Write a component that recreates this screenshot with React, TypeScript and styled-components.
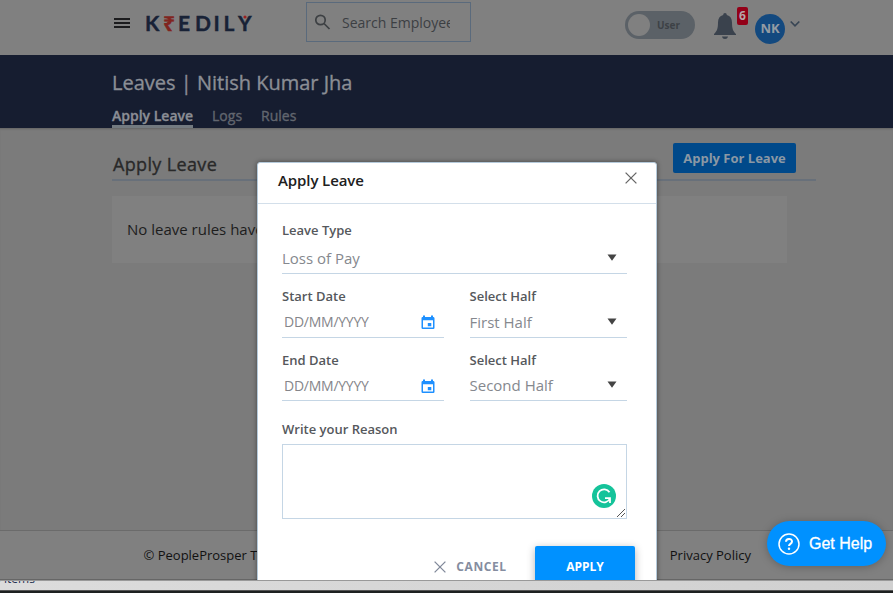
import React from "react";
import styled, { createGlobalStyle } from "styled-components";

const Global = createGlobalStyle`
  *, *::before, *::after { box-sizing: border-box; }
  html, body { margin: 0; padding: 0; overflow: hidden; }
  body { font-family: "Open Sans", "Noto Sans", sans-serif; }
`;

const Screen = styled.div`
  position: relative;
  width: 893px;
  height: 593px;
  overflow: hidden;
  display: flex;
  flex-direction: column;
  background: #7b7b7b;
`;

const Text = styled.span<{
  $size: number;
  $line?: number;
  $weight?: number;
  $color: string;
  $track?: number;
  $medium?: boolean;
}>`
  display: block;
  font-size: ${(p) => p.$size}px;
  line-height: ${(p) => p.$line ?? 20}px;
  font-weight: ${(p) => p.$weight ?? 400};
  color: ${(p) => p.$color};
  letter-spacing: ${(p) => p.$track ?? 0}px;
  -webkit-text-stroke: ${(p) => (p.$medium ? "0.35px currentColor" : "0")};
  white-space: nowrap;
`;

const TopBar = styled.header`
  flex: none;
  height: 55px;
  display: flex;
  align-items: flex-start;
  padding-left: 114px;
  background: #808080;
`;

const MenuIcon = styled.svg`
  margin-top: 17px;
  width: 16px;
  height: 12px;
`;

const Logo = styled.svg`
  margin: 10px 0 0 14px;
  width: 114px;
  height: 26px;
  font-family: Lato, sans-serif;
  font-weight: 700;
  font-size: 21px;
`;

const Search = styled.label`
  margin: 2px 0 0 48px;
  width: 165px;
  height: 40px;
  display: flex;
  align-items: center;
  padding-left: 8px;
  border: 1px solid #5a6a7c;
`;

const SearchText = styled.div`
  margin: 2px 0 0 11px;
  width: 108px;
  overflow: hidden;
`;

const Toggle = styled.div`
  margin: 11px 0 0 154px;
  width: 70px;
  height: 28px;
  border-radius: 14px;
  padding: 3px;
  display: flex;
  align-items: center;
  gap: 7px;
  background: #5b6167;
`;

const Knob = styled.i`
  width: 22px;
  height: 22px;
  border-radius: 50%;
  background: #808080;
`;

const Bell = styled.svg`
  margin: 12px 0 0 19px;
  width: 22px;
  height: 28px;
`;

const Badge = styled.b`
  margin: 7px 0 0 1px;
  width: 11px;
  height: 18px;
  border-radius: 2px;
  background: #930018;
  color: #b5a5a8;
  font-size: 12px;
  line-height: 18px;
  text-align: center;
`;

const Avatar = styled.b`
  margin: 14px 0 0 7px;
  width: 30px;
  height: 30px;
  border-radius: 50%;
  background: #13497f;
  color: #949ca4;
  font-size: 13px;
  line-height: 29px;
  text-align: center;
`;

const Chevron = styled.svg`
  margin: 20px 0 0 5px;
  width: 10px;
  height: 8px;
`;

const Banner = styled.section`
  flex: none;
  height: 73px;
  padding: 14px 0 0 112px;
  background: #161d30;
`;

const Tabs = styled.nav`
  display: flex;
  gap: 19px;
  margin-top: 9px;
`;

const Tab = styled.div<{ $active?: boolean }>`
  height: 22px;
  border-bottom: ${(p) => (p.$active ? "3px solid #737a80" : "none")};
`;

const Content = styled.main`
  flex: none;
  height: 402px;
  padding-left: 112px;
  box-shadow: inset 0 2px 2px -1px #656565;
`;

const Heading = styled.div`
  height: 53px;
  width: 704px;
  display: flex;
  justify-content: space-between;
  padding: 15px 20px 0 1px;
  border-bottom: 2px solid #68707a;
`;

const ApplyFor = styled.div`
  width: 123px;
  height: 30px;
  border-radius: 2px;
  background: #00498a;
  display: flex;
  justify-content: center;
  align-items: center;
`;

const Notice = styled.div`
  margin-top: 15px;
  width: 675px;
  height: 67px;
  padding: 23px 0 0 15px;
  background: #808080;
`;

const Footer = styled.footer`
  flex: none;
  height: 50px;
  border-top: 1px solid #6b6b6b;
  border-bottom: 1px solid #666;
  background: #808080;
  display: flex;
  justify-content: space-between;
  padding: 14px 142px 0 143.5px;
`;

const StatusBar = styled.div`
  flex: none;
  height: 10px;
  border-top: 1px solid #999;
  background: linear-gradient(90deg, #dcdcdc, #d0d0d0);
  overflow: hidden;
`;

const StatusText = styled.div`
  margin: -11px 0 0 -6px;
`;

const BottomEdge = styled.div`
  flex: none;
  height: 3px;
  background: #1d2020;
  border-top: 1px solid #555;
`;

const ModalClip = styled.div`
  position: absolute;
  left: 247px;
  top: 152px;
  width: 420px;
  height: 428px;
  padding: 10px 10px 0;
  overflow: hidden;
`;

const Modal = styled.div`
  width: 400px;
  height: 460px;
  border: 1px solid #b5cadb;
  border-radius: 3px;
  background: #fff;
  box-shadow: 0 0 5px rgba(0, 0, 0, 0.45);
`;

const ModalHead = styled.div`
  height: 41px;
  display: flex;
  justify-content: space-between;
  padding: 7px 19px 0 20px;
  border-bottom: 1px solid #d3dfea;

  svg { margin-top: 2px; }
`;

const Form = styled.div`
  padding: 16px 29px 0 24px;
`;

const Row = styled.div<{ $top?: number }>`
  display: grid;
  grid-template-columns: 162px 157.5px;
  justify-content: space-between;
  margin-top: ${(p) => p.$top ?? 0}px;
`;

const Control = styled.div<{ $h: number; $right: number; $left?: number; $drop?: number }>`
  height: ${(p) => p.$h}px;
  display: flex;
  align-items: flex-start;
  justify-content: space-between;
  padding: ${(p) => p.$drop ?? 6}px ${(p) => p.$right}px 0 ${(p) => p.$left ?? 0}px;
  border-bottom: 1px solid #c5d6e5;
`;

const Arrow = styled.svg`
  margin-top: 6px;
  width: 10px;
  height: 7px;
`;

const CalendarIcon = styled.svg`
  margin-top: 3px;
  width: 14px;
  height: 15px;
`;

const Reason = styled.div`
  margin-top: 5px;
  height: 75px;
  border: 1px solid #c5d6e5;
  display: flex;
  justify-content: flex-end;
  align-items: flex-end;
`;

const Grammar = styled.svg`
  width: 24px;
  height: 24px;
  margin-bottom: 10px;
`;

const Grip = styled.svg`
  width: 10px;
  height: 10px;
`;

const Actions = styled.div`
  display: flex;
  justify-content: flex-end;
  padding: 27px 21px 0 0;
`;

const Cancel = styled.div`
  height: 42px;
  display: flex;
  align-items: center;
  gap: 10px;
  margin-right: 28.5px;
`;

const Apply = styled.div`
  width: 100px;
  height: 42px;
  border-radius: 2px;
  background: #0091ff;
  box-shadow: 0 2px 8px rgba(0, 0, 0, 0.3);
  display: flex;
  justify-content: center;
  align-items: center;
`;

const Help = styled.div`
  position: absolute;
  left: 767px;
  top: 521px;
  width: 119px;
  height: 45px;
  border-radius: 23px;
  padding-left: 11px;
  display: flex;
  align-items: center;
  gap: 9px;
  background: #0091ff;
  box-shadow: 0 1px 8px rgba(0, 0, 0, 0.25);
  color: #fff;
  font: 16px/20px "Liberation Sans", sans-serif;
  -webkit-text-stroke: 0.3px #fff;
  white-space: nowrap;
`;

const Cross = ({ color, size = 12 }: { color: string; size?: number }) => (
  <svg width={size} height={size} viewBox="0 0 12 12">
    <path d="M.6.6 11.4 11.4M11.4.6.6 11.4" stroke={color} strokeWidth="1.3" />
  </svg>
);

const DownArrow = () => (
  <Arrow viewBox="0 0 10 7">
    <path d="M.5.5h9L5 6.8z" fill="#444" />
  </Arrow>
);

const Calendar = () => (
  <CalendarIcon viewBox="0 0 14 15">
    <path
      fill="#1e90ff"
      fillRule="evenodd"
      d="M2 .5h2V2h6V.5h2V2h.5A1.2 1.2 0 0 1 13.500 3.200v9.600a1.200 1.200 0 0 1-1.200 1.200H1.700A1.200 1.200 0 0 1 .5 12.800V3.200A1.200 1.200 0 0 1 1.700 2H2zM2 5.300v7.200h10V5.300zM6.800 8h3.500v3.300H6.800z"
    />
  </CalendarIcon>
);

const Label = ({ children }: { children: React.ReactNode }) => (
  <Text $size={13} $weight={600} $color="#55585c">{children}</Text>
);

const Select = ({ label, value, h, drop }: { label: string; value: string; h: number; drop?: number }) => (
  <div>
    <Label>{label}</Label>
    <Control $h={h} $right={10} $drop={drop}>
      <Text $size={15} $color="#85888e">{value}</Text>
      <DownArrow />
    </Control>
  </div>
);

const DateField = ({ label, h }: { label: string; h: number }) => (
  <div>
    <Label>{label}</Label>
    <Control $h={h} $right={9} $left={2}>
      <Text $size={14} $color="#85858a" $track={-0.25}>DD/MM/YYYY</Text>
      <Calendar />
    </Control>
  </div>
);

export default function App() {
  return (
    <Screen>
      <Global />
      <TopBar>
        <MenuIcon viewBox="0 0 16 12">
          <path d="M0 2h16M0 6h16M0 10h16" stroke="#1c1c1e" strokeWidth="2" />
        </MenuIcon>
        <Logo viewBox="0 0 114 26" fill="#182236" stroke="#182236" strokeWidth="0.4">
          <text x="1" y="20.500">K</text>
          <text x="19" y="20.500" fill="#80251f" stroke="#80251f" fontFamily="Noto Sans" fontSize="21">₹</text>
          <text x="34" y="20.500">E</text>
          <text x="51" y="20.500">D</text>
          <text x="69.500" y="20.500">I</text>
          <text x="79.500" y="20.500">L</text>
          <text x="94" y="20.500">Y</text>
          <circle cx="101" cy="7" r="1.600" fill="#9b2020" stroke="none" />
        </Logo>
        <Search>
          <svg width="16" height="16" viewBox="0 0 16 16" fill="none" stroke="#3d4043" strokeWidth="1.700">
            <circle cx="5.500" cy="6" r="4.700" />
            <path d="m9 9.500 5.500 5.500" />
          </svg>
          <SearchText>
            <Text $size={14} $color="#3c3f43">Search Employee</Text>
          </SearchText>
        </Search>
        <Toggle>
          <Knob />
          <Text $size={10} $weight={700} $color="#3d4146">User</Text>
        </Toggle>
        <Bell viewBox="0 0 22 28" fill="#3a424d">
          <path d="M11 1c1.100 0 1.800.8 1.800 2 3.500.8 5.200 3.500 5.200 7.500 0 6 1 8.500 4 11.500v1H0v-1c3-3 4-5.500 4-11.500C4 6.500 5.700 3.800 9.200 3c0-1.200.7-2 1.800-2M8 24.500h6c-.3 1.700-1.500 2.500-3 2.500s-2.700-.8-3-2.500" />
        </Bell>
        <Badge>6</Badge>
        <Avatar>NK</Avatar>
        <Chevron viewBox="0 0 10 8">
          <path d="m.7 1.500 4.300 4.300 4.300-4.300" fill="none" stroke="#384554" strokeWidth="1.700" />
        </Chevron>
      </TopBar>
      <Banner>
        <Text $size={20} $line={28} $color="#8b8e95" $medium>Leaves | Nitish Kumar Jha</Text>
        <Tabs>
          <Tab $active><Text $size={14} $weight={600} $color="#8b8e95" $medium>Apply Leave</Text></Tab>
          <Tab><Text $size={14} $color="#62666f" $medium>Logs</Text></Tab>
          <Tab><Text $size={14} $color="#62666f" $medium>Rules</Text></Tab>
        </Tabs>
      </Banner>
      <Content>
        <Heading>
          <Text $size={18} $line={42} $color="#292929" $track={0.35} $medium>Apply Leave</Text>
          <ApplyFor><Text $size={13} $weight={700} $color="#8b98a4">Apply For Leave</Text></ApplyFor>
        </Heading>
        <Notice><Text $size={15} $color="#1d1d1d">No leave rules have been assigned</Text></Notice>
      </Content>
      <Footer>
        <Text $size={13} $color="#111">© PeopleProsper Technologies</Text>
        <Text $size={13} $color="#111">Privacy Policy</Text>
      </Footer>
      <StatusBar>
        <StatusText><Text $size={12} $line={18} $color="#243052">0 items</Text></StatusText>
      </StatusBar>
      <BottomEdge />
      <ModalClip>
        <Modal>
          <ModalHead>
            <Text $size={15} $weight={600} $color="#202020" $track={-0.1}>Apply Leave</Text>
            <Cross color="#666" />
          </ModalHead>
          <Form>
            <Select label="Leave Type" value="Loss of Pay" h={34} drop={8} />
            <Row $top={12}>
              <DateField label="Start Date" h={32} />
              <Select label="Select Half" value="First Half" h={32} />
            </Row>
            <Row $top={12}>
              <DateField label="End Date" h={31} />
              <Select label="Select Half" value="Second Half" h={31} drop={5} />
            </Row>
            <Row $top={18}><Label>Write your Reason</Label></Row>
            <Reason>
              <Grammar viewBox="0 0 24 24">
                <circle cx="12" cy="12" r="12" fill="#15c39a" />
                <path d="M17.500 8.200A6.500 6.500 0 1 0 18 14.500M13 14.200h5V19" fill="none" stroke="#fff" strokeWidth="1.800" />
              </Grammar>
              <Grip viewBox="0 0 10 10"><path d="m1 9 8-8M5 9l4-4" stroke="#555" strokeWidth="1" /></Grip>
            </Reason>
          </Form>
          <Actions>
            <Cancel>
              <Cross color="#81899a" />
              <Text $size={12} $weight={700} $color="#858da0" $track={0.55}>CANCEL</Text>
            </Cancel>
            <Apply><Text $size={12} $weight={700} $color="#fff">APPLY</Text></Apply>
          </Actions>
        </Modal>
      </ModalClip>
      <Help>
        <svg width="22" height="22" viewBox="0 0 22 22" fill="none" stroke="#fff">
          <circle cx="11" cy="11" r="10" strokeWidth="1.500" />
          <path d="M8 8.700C8 5 14 5 14 8.500c0 2.500-3 2.300-3 4.500" strokeWidth="2" />
          <circle cx="11" cy="15.800" r="1.200" fill="#fff" stroke="none" />
        </svg>
        Get Help
      </Help>
    </Screen>
  );
}
